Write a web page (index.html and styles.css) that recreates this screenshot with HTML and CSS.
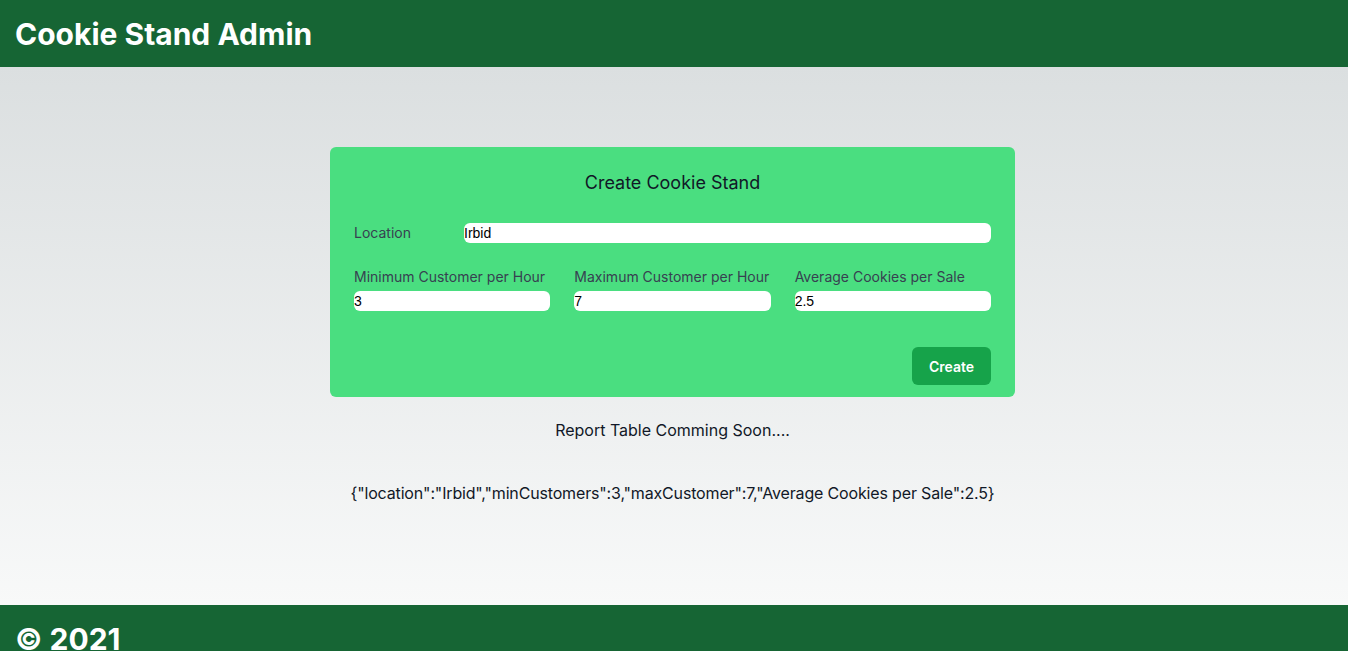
FILE: index.html
```html
<!DOCTYPE html>
<html>
<head>
<meta charset="utf-8">
<title>Cookie Stand Admin</title>
<link rel="stylesheet" href="styles.css">
</head>
<body>
<header class="site-header">
  <h1 class="site-title">Cookie Stand Admin</h1>
</header>
<main class="site-main">
  <form class="stand-form">
    <h2 class="form-title">Create Cookie Stand</h2>
    <div class="location-row">
      <label class="field-label location-label" for="loc">Location</label>
      <input class="field-input location-input" id="loc" type="text" value="Irbid">
    </div>
    <div class="numbers-row">
      <div class="field">
        <label class="field-label" for="min">Minimum Customer per Hour</label>
        <input class="field-input" id="min" type="text" value="3">
      </div>
      <div class="field">
        <label class="field-label" for="max">Maximum Customer per Hour</label>
        <input class="field-input" id="max" type="text" value="7">
      </div>
      <div class="field">
        <label class="field-label" for="avg">Average Cookies per Sale</label>
        <input class="field-input" id="avg" type="text" value="2.5">
      </div>
    </div>
    <div class="actions-row">
      <button class="create-btn" type="button">Create</button>
    </div>
  </form>
  <p class="report-note">Report Table Comming Soon....</p>
  <p class="json-out">{"location":"Irbid","minCustomers":3,"maxCustomer":7,"Average Cookies per Sale":2.5}</p>
</main>
<footer class="site-footer">
  <p class="footer-text">© 2021</p>
</footer>
</body>
</html>
```
FILE: styles.css
```css
* { box-sizing: border-box; }
html, body { margin: 0; padding: 0; }
body {
  font-family: Inter, "Noto Sans", sans-serif;
  color: #111827;
}
.site-header {
  background: #166534;
  height: 67px;
  padding: 0 15px;
  display: flex;
  align-items: center;
}
.site-title {
  margin: 0;
  color: #fff;
  font-size: 30px;
  font-weight: 700;
  line-height: 36px;
}
.site-main {
  height: 538px;
  background: linear-gradient(180deg, #dbdfe0 0%, #f8f9f9 100%);
  display: flex;
  flex-direction: column;
  align-items: center;
  padding-top: 80px;
  padding-right: 3px;
}
.stand-form {
  width: 685px;
  background: #4ade80;
  border-radius: 6px;
  padding: 24px 24px 12px;
  display: flex;
  flex-direction: column;
}
.form-title {
  margin: 0;
  text-align: center;
  font-size: 18px;
  font-weight: 400;
  line-height: 24px;
  color: #111827;
}
.location-row {
  display: flex;
  align-items: center;
  margin-top: 28px;
}
.location-label {
  width: 110px;
  flex: none;
}
.field-label {
  font-size: 14px;
  line-height: 20px;
  color: #374151;
}
.field-input {
  border: none;
  outline: none;
  background: #fff;
  border-radius: 6px;
  height: 20px;
  padding: 0;
  font-family: "Liberation Sans", Arial, sans-serif;
  font-size: 14px;
  color: #000;
}
.location-input { flex: 1; }
.numbers-row {
  display: grid;
  grid-template-columns: 1fr 1fr 1fr;
  gap: 24px;
  margin-top: 24px;
}
.field {
  display: flex;
  flex-direction: column;
  gap: 4px;
}
.field .field-input { width: 100%; }
.actions-row {
  display: flex;
  justify-content: flex-end;
  margin-top: 36px;
}
.create-btn {
  background: #16a34a;
  color: #fff;
  border: none;
  border-radius: 6px;
  width: 79px;
  height: 38px;
  font-family: Inter, sans-serif;
  font-size: 14px;
  font-weight: 600;
}
.report-note {
  margin: 21px 0 0;
  font-size: 16px;
  line-height: 24px;
  color: #111827;
}
.json-out {
  margin: 39px 0 0;
  font-size: 16px;
  line-height: 24px;
  color: #111827;
  letter-spacing: -0.16px;
}
.site-footer {
  background: #166534;
  height: 80px;
  padding: 16px 15px;
}
.footer-text {
  margin: 0;
  color: #fff;
  font-size: 30px;
  font-weight: 700;
  line-height: 36px;
}
```
